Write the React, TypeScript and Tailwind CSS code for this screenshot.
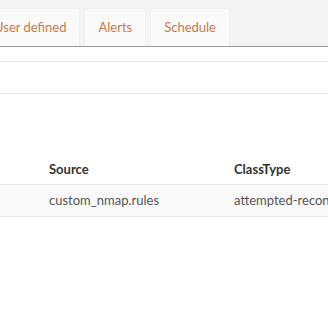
export default function App() {
  const tabs = ["User defined", "Alerts", "Schedule"];
  return (
    <div className="w-[328px] h-[320px] overflow-hidden bg-white font-['Lato',sans-serif]">
      {/* Tab bar */}
      <div className="h-[47px] bg-[#f4f4f4] border-b border-[#9a9a9a] flex items-end gap-[4px] overflow-hidden">
        {tabs.map((t, i) => (
          <div
            key={t}
            className={`h-[38px] flex items-center whitespace-nowrap bg-[#fafafa] border border-b-0 border-[#f0f0f0] rounded-t-[4px] text-[13px] text-[#c77a45] ${
              i === 0 ? "-ml-[22px] pl-[15px] pr-[13px]" : "px-[13px]"
            }`}
          >
            {t}
          </div>
        ))}
      </div>

      {/* Toolbar rows */}
      <div className="h-[15px] border-b border-[#e6e6e6]" />
      <div className="h-[32px] border-b border-[#e6e6e6]" />

      <div className="h-[61px]" />

      {/* Table */}
      <div className="text-[13px]">
        <div className="h-[30px] flex items-center border-b border-[#e8e8e8] font-bold text-[#333]">
          <div className="w-[234px] pl-[49px]">Source</div>
          <div className="flex-1 whitespace-nowrap">ClassType</div>
        </div>
        <div className="h-[32px] flex items-center bg-[#f9f9f9] border-b border-[#e8e8e8] text-[#555]">
          <div className="w-[234px] pl-[49px]">custom_nmap.rules</div>
          <div className="flex-1 whitespace-nowrap overflow-hidden">attempted-recon</div>
        </div>
      </div>
    </div>
  );
}
